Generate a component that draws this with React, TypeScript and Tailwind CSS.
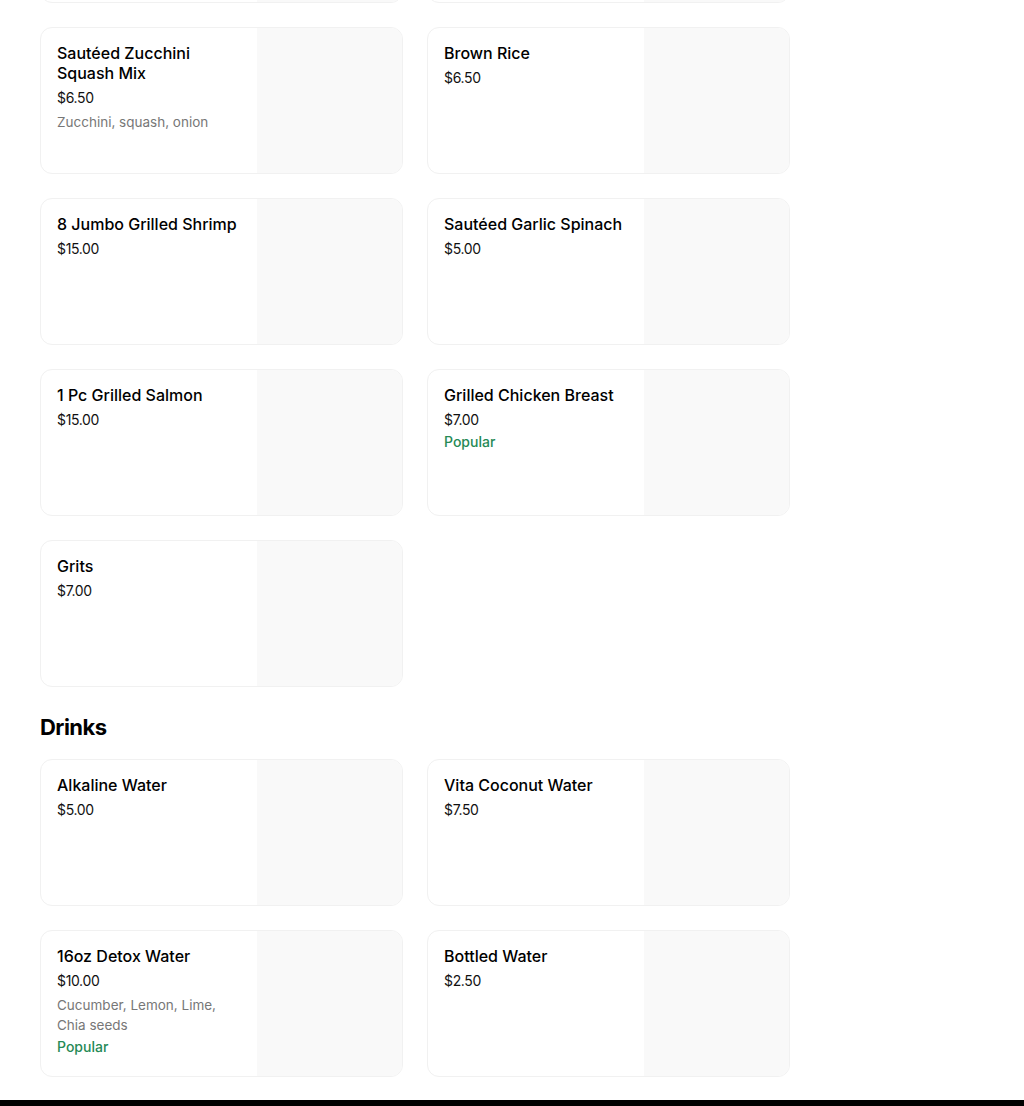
type Item = {
  name: string
  price: string
  desc?: string
  popular?: boolean
}

const sides: Item[] = [
  { name: 'Sautéed Zucchini Squash Mix', price: '$6.50', desc: 'Zucchini, squash, onion' },
  { name: 'Brown Rice', price: '$6.50' },
  { name: '8 Jumbo Grilled Shrimp', price: '$15.00' },
  { name: 'Sautéed Garlic Spinach', price: '$5.00' },
  { name: '1 Pc Grilled Salmon', price: '$15.00' },
  { name: 'Grilled Chicken Breast', price: '$7.00', popular: true },
  { name: 'Grits', price: '$7.00' },
]

const drinks: Item[] = [
  { name: 'Alkaline Water', price: '$5.00' },
  { name: 'Vita Coconut Water', price: '$7.50' },
  { name: '16oz Detox Water', price: '$10.00', desc: 'Cucumber, Lemon, Lime, Chia seeds', popular: true },
  { name: 'Bottled Water', price: '$2.50' },
]

function MenuCard({ item }: { item?: Item }) {
  return (
    <div className="flex h-[147px] overflow-hidden rounded-xl border border-[#f1f1f1] bg-white">
      <div className="min-w-0 flex-1 px-4 pt-[15px]">
        {item && (
          <>
            <div className="text-[16px] font-medium leading-5 text-black">{item.name}</div>
            <div className="mt-[5px] text-[14px] leading-5 tracking-tight text-[#111]">{item.price}</div>
            {item.desc && (
              <div className="mt-1 text-[13.5px] leading-5 text-[#777]">{item.desc}</div>
            )}
            {item.popular && (
              <div className="mt-0.5 text-[14px] font-medium leading-5 text-[#268a56]">Popular</div>
            )}
          </>
        )}
      </div>
      <div className="w-[145px] shrink-0 bg-[#f9f9f9]" />
    </div>
  )
}

export default function App() {
  return (
    <div className="min-h-screen bg-white font-['Inter','Liberation_Sans',sans-serif] text-black">
      <div className="w-[750px] ml-10">
        {/* tail of the row above, scrolled mostly out of view */}
        <div className="-mt-[144px] grid grid-cols-2 gap-6">
          <MenuCard />
          <MenuCard />
        </div>

        <div className="mt-6 grid grid-cols-2 gap-6">
          {sides.map((item) => (
            <MenuCard key={item.name} item={item} />
          ))}
        </div>

        <h2 className="pb-4 pt-6 text-[22px] font-bold leading-8 tracking-tight">Drinks</h2>

        <div className="grid grid-cols-2 gap-6">
          {drinks.map((item) => (
            <MenuCard key={item.name} item={item} />
          ))}
        </div>
      </div>

      <footer className="mt-[23px] h-40 bg-black" />
    </div>
  )
}
